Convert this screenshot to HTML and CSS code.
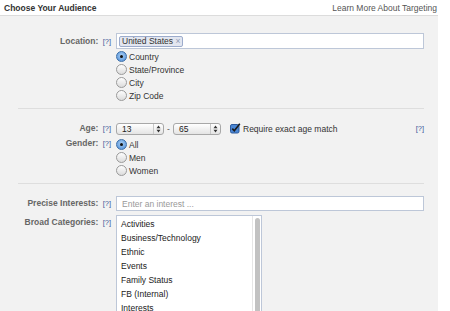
FILE: index.html
```html
<!DOCTYPE html>
<html lang="en">
<head>
    <meta charset="UTF-8">
    <title>Choose Your Audience</title>
    <link rel="stylesheet" href="styles.css">
</head>
<body>
    <div class="head">
        <span class="title">Choose Your Audience</span>
        <a class="learn">Learn More About Targeting</a>
    </div>

    <div class="panel">
        <div class="section first">
            <div class="label loc-label">Location: <span class="help">[?]</span></div>
            <div class="field">
                <div class="text-input token-input">
                    <span class="token">United States <span class="x">&times;</span></span>
                </div>
                <div class="radios">
                    <div class="radio-row"><span class="radio on"></span>Country</div>
                    <div class="radio-row"><span class="radio"></span>State/Province</div>
                    <div class="radio-row"><span class="radio"></span>City</div>
                    <div class="radio-row"><span class="radio"></span>Zip Code</div>
                </div>
            </div>
        </div>

        <div class="section second">
            <div class="label age-label">Age: <span class="help">[?]</span></div>
            <div class="field age-row">
                <div class="select"><span>13</span><span class="arrows"><svg width="5" height="8" viewBox="0 0 5 8"><path d="M0.5 3.2 L2.5 0.6 L4.5 3.2 Z M0.5 4.8 L2.5 7.4 L4.5 4.8 Z" fill="#333"/></svg></span></div>
                <span class="dash">-</span>
                <div class="select"><span>65</span><span class="arrows"><svg width="5" height="8" viewBox="0 0 5 8"><path d="M0.5 3.2 L2.5 0.6 L4.5 3.2 Z M0.5 4.8 L2.5 7.4 L4.5 4.8 Z" fill="#333"/></svg></span></div>
                <span class="check"><svg width="11" height="11" viewBox="0 0 11 11"><rect x="0.5" y="1.5" width="8.5" height="8.5" rx="1.5" fill="#4a86d4" stroke="#2d5a9c"/><path d="M2.3 5.6 L4.3 7.8 L9.8 0.8" fill="none" stroke="#1a1a1a" stroke-width="1.6"/></svg></span>
                <span class="check-label">Require exact age match</span>
                <span class="help right-help">[?]</span>
            </div>
            <div class="label gender-label">Gender: <span class="help">[?]</span></div>
            <div class="field">
                <div class="radios">
                    <div class="radio-row"><span class="radio on"></span>All</div>
                    <div class="radio-row"><span class="radio"></span>Men</div>
                    <div class="radio-row"><span class="radio"></span>Women</div>
                </div>
            </div>
        </div>

        <div class="section third">
            <div class="label precise-label">Precise Interests: <span class="help">[?]</span></div>
            <div class="field">
                <div class="text-input placeholder">Enter an interest ...</div>
            </div>
            <div class="label broad-label">Broad Categories: <span class="help">[?]</span></div>
            <div class="field">
                <div class="listbox">
                    <ul class="items">
                        <li>Activities</li>
                        <li>Business/Technology</li>
                        <li>Ethnic</li>
                        <li>Events</li>
                        <li>Family Status</li>
                        <li>FB (Internal)</li>
                        <li>Interests</li>
                    </ul>
                    <div class="scroll"><div class="thumb"></div></div>
                </div>
            </div>
        </div>
    </div>
</body>
</html>
```

FILE: styles.css
```css
body {
    margin: 0;
    font-family: "Liberation Sans", Arial, sans-serif;
    font-size: 8.5px;
    color: #333;
    background: #fff;
    overflow: hidden;
}

.head {
    width: 438px;
    height: 16px;
    box-sizing: border-box;
    padding: 0 1px 0 4px;
    display: flex;
    justify-content: space-between;
    align-items: center;
    border-bottom: 1px solid #dcdcdc;
}

.title {
    font-weight: bold;
    color: #333;
}

.learn {
    color: #555;
}

.panel {
    width: 438px;
    height: 295px;
    box-sizing: border-box;
    background: #f2f2f2;
    padding-right: 14px;
}

.section {
    display: grid;
    grid-template-columns: 111px 1fr;
    column-gap: 5px;
    align-items: start;
}

.first {
    padding-top: 17px;
    padding-bottom: 6px;
    border-bottom: 1px solid #dedede;
    margin-left: 18px;
    grid-template-columns: 93px 1fr;
}

.second {
    padding-top: 13px;
    padding-bottom: 6px;
    border-bottom: 1px solid #dedede;
    margin-left: 18px;
    grid-template-columns: 93px 1fr;
    row-gap: 2px;
}

.third {
    padding-top: 12px;
    row-gap: 4px;
}

.label {
    text-align: right;
    font-weight: bold;
    color: #666;
    white-space: nowrap;
}

.help {
    font-weight: normal;
    color: #3b5998;
    font-size: 7.5px;
    margin-left: 2px;
}

.loc-label {
    padding-top: 3px;
}

.age-label {
    padding-top: 1px;
}

.gender-label {
    padding-top: 1px;
}

.precise-label {
    padding-top: 2px;
}

.broad-label {
    padding-top: 2px;
}

.text-input {
    height: 16px;
    box-sizing: border-box;
    border: 1px solid #bdc7d8;
    background: #fff;
    display: flex;
    align-items: center;
    padding: 0 2px;
}

.token {
    background: #e2e6f0;
    border: 1px solid #9daccc;
    border-radius: 2px;
    padding: 0 2px;
    line-height: 9px;
    color: #333;
}

.token .x {
    color: #8f9bb5;
}

.placeholder {
    height: 15px;
    color: #999;
    padding-left: 5px;
}

.radios {
    margin-top: 1px;
}

.radio-row {
    height: 13px;
    display: flex;
    align-items: center;
    gap: 2px;
    color: #333;
}

.radio {
    width: 9px;
    height: 9px;
    border-radius: 50%;
    border: 1px solid #9a9a9a;
    background: linear-gradient(#fdfdfd, #dcdcdc);
    display: flex;
    align-items: center;
    justify-content: center;
}

.radio.on {
    border-color: #3d6fa8;
    background: radial-gradient(circle at 50% 40%, #a9d0f5, #4b8ad6);
}

.radio.on::after {
    content: "";
    width: 3px;
    height: 3px;
    border-radius: 50%;
    background: #111;
}

.age-row {
    display: flex;
    align-items: center;
    height: 13px;
}

.select {
    width: 48px;
    height: 12px;
    box-sizing: border-box;
    border: 1px solid #a8a8a8;
    border-radius: 3px;
    background: linear-gradient(#fff, #e4e4e4);
    display: flex;
    align-items: center;
    justify-content: space-between;
    padding-left: 5px;
    color: #222;
}

.arrows {
    width: 9px;
    height: 100%;
    border-left: 1px solid #c8c8c8;
    display: flex;
    align-items: center;
    justify-content: center;
}

.dash {
    width: 9px;
    text-align: center;
    color: #555;
}

.check {
    margin-left: 9px;
    display: flex;
}

.check-label {
    margin-left: 2px;
    color: #333;
}

.right-help {
    margin-left: auto;
}

.listbox {
    width: 146px;
    height: 100px;
    box-sizing: border-box;
    border: 1px solid #bdc7d8;
    background: #fff;
    display: flex;
}

.items {
    list-style: none;
    margin: 0;
    padding: 1px 0 0 4px;
    flex: 1;
}

.items li {
    height: 14px;
    line-height: 14px;
    color: #222;
}

.scroll {
    width: 9px;
    border-left: 1px solid #e6e6e6;
    padding: 2px 1px 0 2px;
    box-sizing: border-box;
}

.thumb {
    width: 5px;
    height: 100px;
    border-radius: 3px;
    background: #c2c2c2;
}
```
